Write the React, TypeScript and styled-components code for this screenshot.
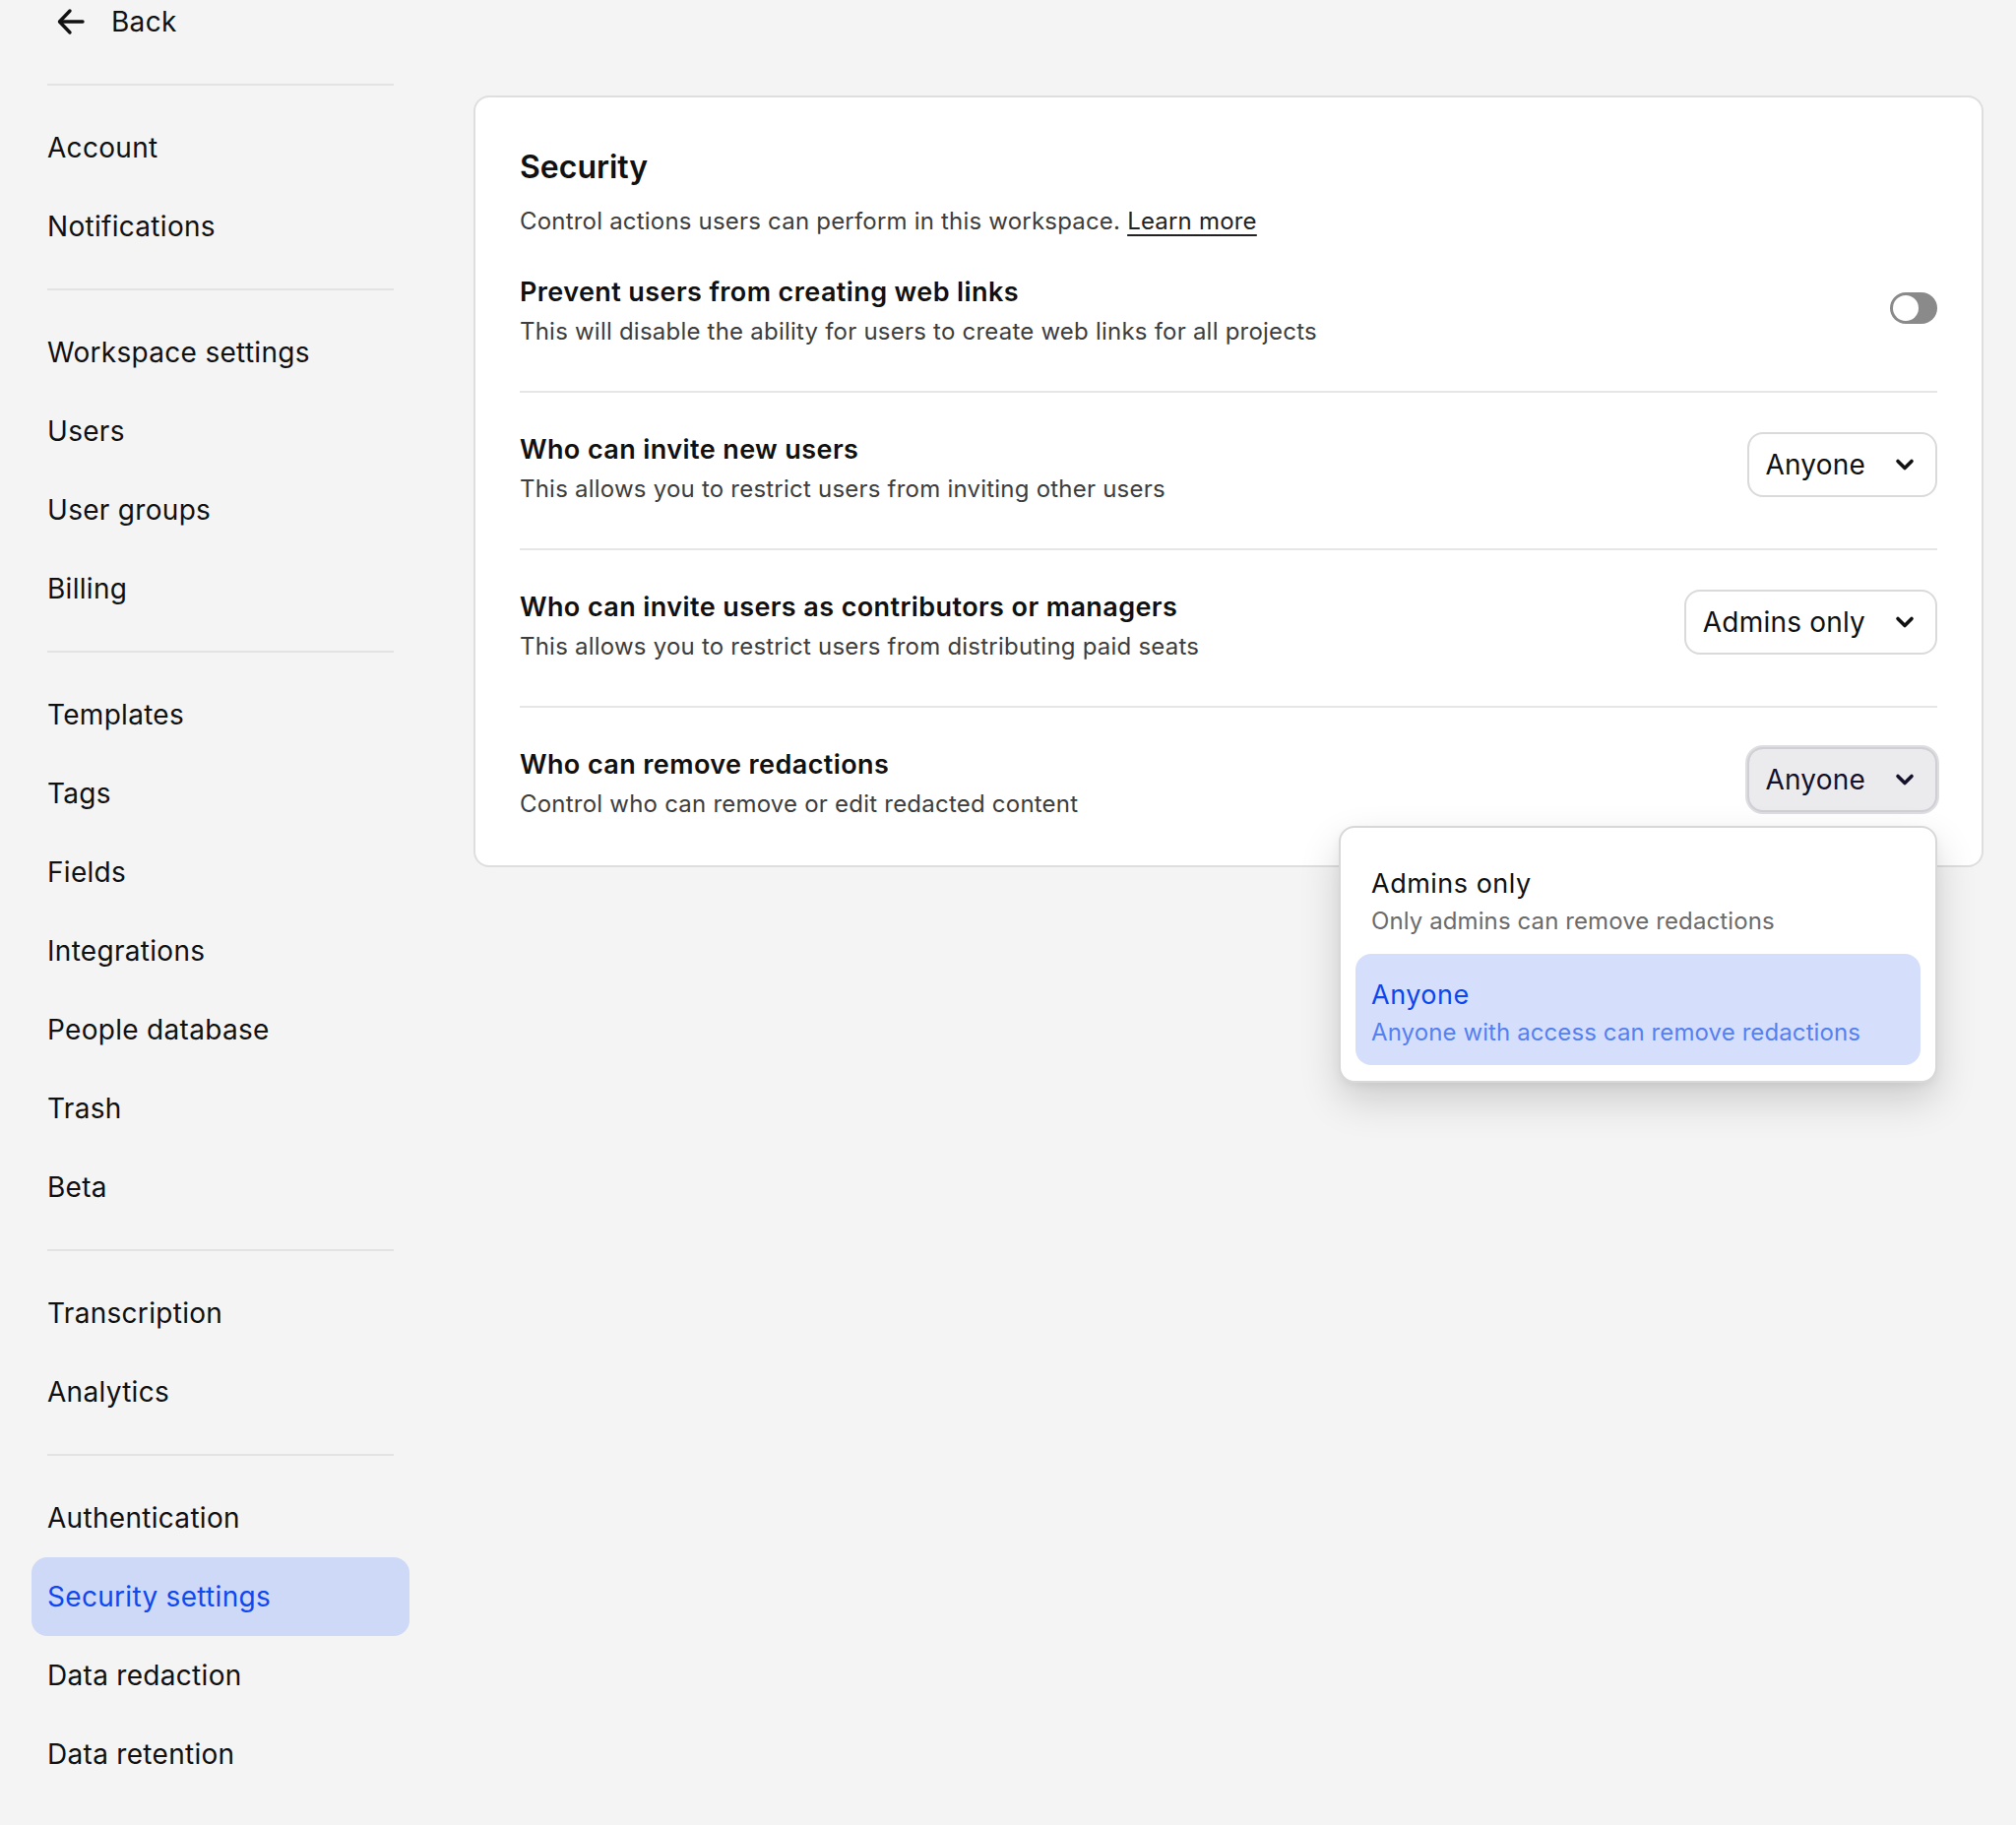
import React from 'react'
import styled, { createGlobalStyle } from 'styled-components'

const GlobalStyle = createGlobalStyle`
  * { box-sizing: border-box; }
  body {
    margin: 0;
    background: #f4f4f4;
    font-family: Inter, "Noto Sans", Arial, sans-serif;
    color: #111;
    -webkit-font-smoothing: antialiased;
  }
`

const Page = styled.div`
  display: flex;
  min-height: 1854px;
`

const Sidebar = styled.nav`
  width: 448px;
  flex-shrink: 0;
  padding: 0 32px;
  display: flex;
  flex-direction: column;
`

const BackButton = styled.div`
  display: flex;
  align-items: center;
  gap: 25px;
  height: 44px;
  padding-left: 24px;
  margin-bottom: 18px;
  font-size: 28px;
  letter-spacing: 0.3px;
  cursor: pointer;
`

const Divider = styled.hr`
  border: none;
  height: 2px;
  background: #e3e3e3;
  margin: 23px 16px;
`

const NavItem = styled.div<{ $active?: boolean }>`
  height: 80px;
  line-height: 80px;
  padding-left: 16px;
  border-radius: 16px;
  font-size: 28px;
  letter-spacing: 0.3px;
  color: ${p => (p.$active ? '#1048f0' : '#111')};
  background: ${p => (p.$active ? '#cdd9f6' : 'transparent')};
  cursor: pointer;
`

const Main = styled.main`
  flex: 1;
  padding: 97px 33px 0 33px;
`

const Card = styled.section`
  background: #fff;
  border: 2px solid #dedede;
  border-radius: 16px;
  padding: 53px 45px 0 45px;
`

const Header = styled.header`
  margin-bottom: -3px;
`

const Title = styled.h1`
  margin: 0;
  font-size: 32px;
  line-height: 36px;
  font-weight: 600;
  color: #111;
`

const Lead = styled.p`
  margin: 20px 0 0;
  font-size: 24px;
  line-height: 34px;
  letter-spacing: 0.2px;
  color: #3d3d3d;

  a {
    color: #222;
    text-decoration: underline;
    text-decoration-thickness: 2px;
    text-underline-offset: 5px;
  }
`

const Row = styled.div<{ $last?: boolean }>`
  display: flex;
  align-items: center;
  justify-content: space-between;
  padding: 41px 0 43px;
  border-bottom: 2px solid ${p => (p.$last ? 'transparent' : '#e6e6e6')};
`

const RowText = styled.div`
  display: flex;
  flex-direction: column;
  gap: 6px;
`

const RowTitle = styled.div`
  font-size: 27px;
  line-height: 34px;
  font-weight: 600;
  letter-spacing: 0.4px;
  color: #111;
`

const RowDesc = styled.div`
  font-size: 24px;
  line-height: 34px;
  letter-spacing: 0.22px;
  color: #3d3d3d;
`

const Toggle = styled.div`
  width: 48px;
  height: 32px;
  border-radius: 16px;
  background: #8a8a8a;
  padding: 3px;
  display: flex;
  margin: -4px 0 4px;

  &::before {
    content: '';
    width: 26px;
    height: 26px;
    border-radius: 50%;
    background: #fff;
  }
`

const SelectWrap = styled.div`
  position: relative;
  margin: -5px 0 5px;
`

const Select = styled.div<{ $open?: boolean; $shift?: boolean }>`
  display: flex;
  align-items: center;
  gap: 30px;
  height: 66px;
  padding: 0 21px 0 17px;
  border-radius: 16px;
  border: 2px solid ${p => (p.$open ? '#cfcfd4' : '#dadada')};
  background: ${p => (p.$open ? '#ebebee' : '#fff')};
  box-shadow: ${p => (p.$open ? '0 0 0 2px #dedee2' : 'none')};
  font-size: 28px;
  letter-spacing: 0.2px;
  color: ${p => (p.$open ? '#15112b' : '#111')};
  margin: ${p => (p.$shift ? '-5px 0 5px' : '0')};
  cursor: pointer;
`

const Menu = styled.div`
  position: absolute;
  top: calc(100% + 14px);
  right: 0;
  width: 608px;
  background: #fff;
  border: 2px solid #d8d8d8;
  border-radius: 16px;
  padding: 15px 15px 16px;
  box-shadow: 0 18px 40px rgba(0, 0, 0, 0.16), 0 4px 10px rgba(0, 0, 0, 0.05);
  z-index: 2;
`

const Option = styled.div<{ $selected?: boolean }>`
  padding: 25px 16px 16px;
  border-radius: 16px;
  background: ${p => (p.$selected ? '#d5dffb' : 'transparent')};
  display: flex;
  flex-direction: column;
  gap: 4px;
`

const OptionTitle = styled.div<{ $selected?: boolean }>`
  font-size: 27px;
  line-height: 34px;
  letter-spacing: 0.5px;
  color: ${p => (p.$selected ? '#0b46ee' : '#111')};
`

const OptionDesc = styled.div<{ $selected?: boolean }>`
  font-size: 24px;
  line-height: 34px;
  letter-spacing: 0.1px;
  color: ${p => (p.$selected ? '#5580f2' : '#6b6b6b')};
`

const ArrowLeft = () => (
  <svg width="32" height="32" viewBox="0 0 32 32" fill="none" stroke="#111" strokeWidth="3.4" strokeLinecap="round" strokeLinejoin="round">
    <path d="M28 16H5" />
    <path d="M15 5L4.5 16L15 27" />
  </svg>
)

const Chevron = () => (
  <svg width="20" height="14" viewBox="0 0 20 14" fill="none" stroke="currentColor" strokeWidth="3.6" strokeLinecap="round" strokeLinejoin="round">
    <path d="M3 3.5L10 10.5L17 3.5" />
  </svg>
)

const navGroups = [
  ['Account', 'Notifications'],
  ['Workspace settings', 'Users', 'User groups', 'Billing'],
  ['Templates', 'Tags', 'Fields', 'Integrations', 'People database', 'Trash', 'Beta'],
  ['Transcription', 'Analytics'],
  ['Authentication', 'Security settings', 'Data redaction', 'Data retention'],
]

const App = () => {
  return (
    <Page>
      <GlobalStyle />
      <Sidebar>
        <BackButton>
          <ArrowLeft />
          Back
        </BackButton>
        {navGroups.map((group, i) => (
          <React.Fragment key={i}>
            <Divider />
            {group.map(item => (
              <NavItem key={item} $active={item === 'Security settings'}>
                {item}
              </NavItem>
            ))}
          </React.Fragment>
        ))}
      </Sidebar>

      <Main>
        <Card>
          <Header>
            <Title>Security</Title>
            <Lead>
              Control actions users can perform in this workspace. <a href="#">Learn more</a>
            </Lead>
          </Header>

          <Row>
            <RowText>
              <RowTitle>Prevent users from creating web links</RowTitle>
              <RowDesc>This will disable the ability for users to create web links for all projects</RowDesc>
            </RowText>
            <Toggle />
          </Row>

          <Row>
            <RowText>
              <RowTitle>Who can invite new users</RowTitle>
              <RowDesc>This allows you to restrict users from inviting other users</RowDesc>
            </RowText>
            <Select $shift>
              Anyone
              <Chevron />
            </Select>
          </Row>

          <Row>
            <RowText>
              <RowTitle>Who can invite users as contributors or managers</RowTitle>
              <RowDesc>This allows you to restrict users from distributing paid seats</RowDesc>
            </RowText>
            <Select $shift>
              Admins only
              <Chevron />
            </Select>
          </Row>

          <Row $last>
            <RowText>
              <RowTitle>Who can remove redactions</RowTitle>
              <RowDesc>Control who can remove or edit redacted content</RowDesc>
            </RowText>
            <SelectWrap>
              <Select $open>
                Anyone
                <Chevron />
              </Select>
              <Menu>
                <Option>
                  <OptionTitle>Admins only</OptionTitle>
                  <OptionDesc>Only admins can remove redactions</OptionDesc>
                </Option>
                <Option $selected>
                  <OptionTitle $selected>Anyone</OptionTitle>
                  <OptionDesc $selected>Anyone with access can remove redactions</OptionDesc>
                </Option>
              </Menu>
            </SelectWrap>
          </Row>
        </Card>
      </Main>
    </Page>
  )
}

export default App
